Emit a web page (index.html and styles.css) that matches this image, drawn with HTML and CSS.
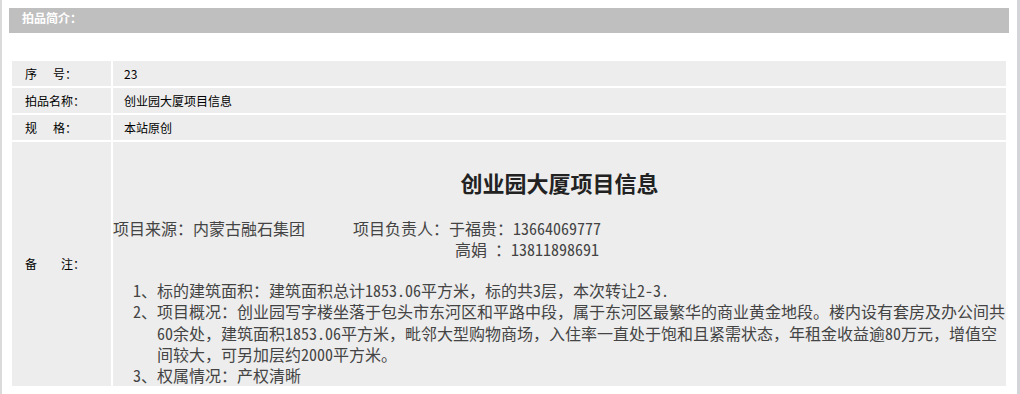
FILE: index.html
```html
<!DOCTYPE html>
<html lang="zh-CN">
<head>
<meta charset="utf-8">
<title>拍品简介</title>
<link rel="stylesheet" href="styles.css">
</head>
<body>
<div class="page">
  <div class="bar">拍品简介：</div>
  <table class="info">
    <colgroup><col class="c-label"><col class="c-value"></colgroup>
    <tr><th><span class="gap1">序</span>号：</th><td>23</td></tr>
    <tr><th>拍品名称：</th><td>创业园大厦项目信息</td></tr>
    <tr><th><span class="gap1">规</span>格：</th><td>本站原创</td></tr>
    <tr class="remark">
      <th><span class="gap2">备</span>注：</th>
      <td class="desc">
        <div class="title">创业园大厦项目信息</div>
        <div class="src">项目来源：内蒙古融石集团<span class="sp-wide"></span>项目负责人：于福贵：<span class="hw">13664069777</span></div>
        <div class="src src2">高娟<span class="sp-half"></span>：<span class="hw">13811898691</span></div>
        <ol class="items">
          <li>标的建筑面积：建筑面积总计<span class="hw">1853.06</span>平方米，标的共<span class="hw">3</span>层，本次转让<span class="hw">2-3.</span></li>
          <li>项目概况：创业园写字楼坐落于包头市东河区和平路中段，属于东河区最繁华的商业黄金地段。楼内设有套房及办公间共<span class="hw">60</span>余处，建筑面积<span class="hw">1853.06</span>平方米，毗邻大型购物商场，入住率一直处于饱和且紧需状态，年租金收益逾<span class="hw">80</span>万元，增值空间较大，可另加层约<span class="hw">2000</span>平方米。</li>
          <li>权属情况：产权清晰</li>
        </ol>
      </td>
    </tr>
  </table>
</div>
</body>
</html>
```
FILE: styles.css
```css
html, body {
  margin: 0;
  padding: 0;
  background: #fff;
}
body {
  font-family: "Noto Sans CJK SC", "Noto Sans", sans-serif;
  font-size: 12px;
  color: #000;
}
.page {
  box-sizing: border-box;
  height: 394px;
  border-left: 2px solid #dadada;
  border-right: 3px solid #d3d3da;
  padding: 8px 0 0 7px;
  overflow: hidden;
}
.bar {
  width: 1000px;
  height: 25px;
  box-sizing: border-box;
  padding-left: 13px;
  line-height: 20px;
  background: #bfbfbf;
  color: #fff;
  font-weight: bold;
  font-size: 12px;
}
.info {
  margin: 26px 0 0 1px;
  width: 998px;
  table-layout: fixed;
  border-collapse: separate;
  border-spacing: 2px;
}
.c-label { width: 99px; }
.info tr { height: 25px; }
.info th,
.info td {
  background: #ededed;
  padding: 0;
  font-size: 12px;
  font-weight: normal;
  text-align: left;
  vertical-align: middle;
  line-height: 14px;
}
.info th { padding-left: 13px; }
.info td { padding-left: 11px; }
.gap1 { display: inline-block; width: 28px; }
.gap2 { display: inline-block; width: 36px; }

.info td.desc {
  padding: 0;
  vertical-align: top;
  font-size: 16px;
  color: #444;
}
.hw { font-feature-settings: "hwid"; }
.title {
  margin-top: 25px;
  line-height: 30px;
  font-size: 22px;
  font-weight: bold;
  text-align: center;
  color: #222;
}
.src {
  line-height: 21px;
  white-space: nowrap;
}
.title + .src { margin-top: 21px; }
.src2 { padding-left: 342px; }
.sp-wide { display: inline-block; width: 48px; }
.sp-half { display: inline-block; width: 8px; }

@counter-style dun {
  system: extends decimal;
  suffix: "、";
}
.items {
  margin: 20px 0 0;
  padding-left: 44px;
  list-style: dun outside;
  line-height: 21.3px;
}
.items li::marker { font-feature-settings: "hwid"; }
```
